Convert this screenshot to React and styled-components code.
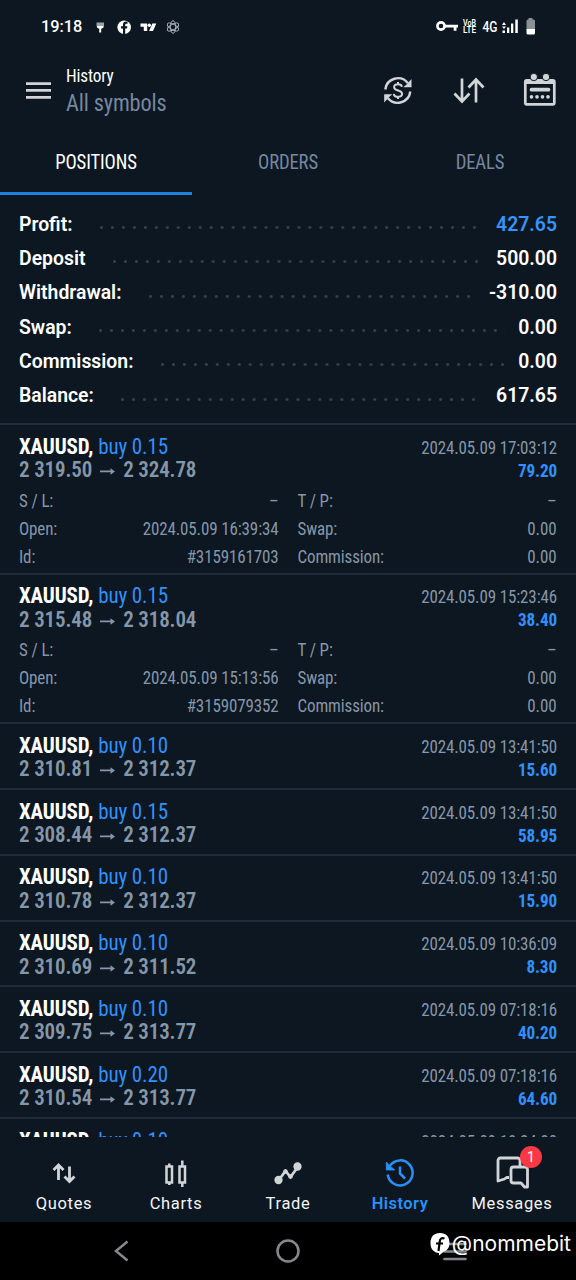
import React from 'react';
import styled, { createGlobalStyle } from 'styled-components';

const GlobalStyle = createGlobalStyle`
  * {
    box-sizing: border-box;
  }

  body {
    margin: 0;
    background: #0c1721;
    font-family: Roboto, 'Liberation Sans', sans-serif;
  }
`;

const Screen = styled.div`
  position: relative;
  display: flex;
  flex-direction: column;
  width: 576px;
  height: 1280px;
  overflow: hidden;
  background: #0c1721;
  color: #fff;
`;

const Condensed = styled.span`
  display: block;
  font-family: 'Roboto Condensed', Roboto, sans-serif;
  font-stretch: ${p => (p.$wide ? 110 : 75)}%;
  font-size: ${p => p.$size}px;
  line-height: ${p => p.$line || p.$size}px;
  font-weight: ${p => p.$weight || 400};
  letter-spacing: -0.13px;
  color: ${p => p.$color || '#fff'};
  white-space: pre;
  transform: scaleY(1.06);
`;

const StatusBar = styled.div`
  display: flex;
  justify-content: space-between;
  height: 52px;
  padding: 0 40px 0 41px;
`;

const StatusGroup = styled.div`
  display: flex;
  align-items: center;
  height: 53px;
`;

const Clock = styled.span`
  width: 54px;
  font-size: 16.3px;
  font-weight: 500;
`;

const Header = styled.header`
  display: flex;
  height: 78px;
  padding: 0 19px 0 25px;
`;

const MenuButton = styled.div`
  padding-top: 29px;
`;

const Actions = styled.div`
  padding-top: 20px;
`;

const Titles = styled.div`
  flex: 1;
  padding: 13px 0 0 15px;
`;

const Tabs = styled.nav`
  display: grid;
  grid-template-columns: repeat(3, 1fr);
  height: 65px;
`;

const Tab = styled.div`
  display: flex;
  justify-content: center;
  padding-top: 21px;
  border-bottom: 3px solid ${p => (p.$active ? '#1d82dc' : 'transparent')};
`;

const Summary = styled.section`
  height: 228px;
  padding: 12px 19px 0;
`;

const SummaryRow = styled.div`
  display: flex;
  align-items: center;
  height: 34.3px;
  font-size: 19.4px;
  font-weight: 600;
`;

const Dots = styled.span`
  flex: none;
  width: ${p => p.$count * 10.97}px;
  height: 3px;
  margin: 7px 0 0 27.5px;
  background: radial-gradient(circle at 1.5px 1.5px, #33404b 1.2px, transparent 1.7px) 0 0 / 10.97px 3px repeat-x;
`;

const SummaryValue = styled.span`
  margin-left: auto;
  color: ${p => (p.$profit ? '#3794fb' : '#fff')};
`;

const TradeList = styled.main`
  height: 714px;
  overflow: hidden;
`;

const Trade = styled.article`
  height: ${p => (p.$open ? 149.6 : 65.8)}px;
  padding: 10.6px 19px 0;
  border-top: 2px solid #1f2b36;
`;

const TradeTop = styled.div`
  display: flex;
  justify-content: space-between;
  height: 46px;
`;

const TradeSide = styled.div`
  padding-top: ${p => (p.$right ? 1 : 0)}px;
  text-align: ${p => (p.$right ? 'right' : 'left')};
`;

const TitleLine = styled.div`
  display: flex;
  gap: 5px;
`;

const PriceLine = styled.div`
  display: flex;
  align-items: center;
  gap: 8px;
  height: 22px;
`;

const Details = styled.div`
  display: grid;
  grid-template-columns: 259.5px 259px;
  column-gap: 19px;
  padding-top: 5px;
`;

const Detail = styled.div`
  display: flex;
  justify-content: space-between;
  height: 28px;
`;

const BottomNav = styled.nav`
  display: grid;
  grid-template-columns: repeat(5, 112px);
  justify-content: center;
  height: 85px;
`;

const NavItem = styled.div`
  position: relative;
  display: flex;
  flex-direction: column;
  align-items: center;
  padding-top: 18px;
  font-size: 16.5px;
  line-height: 20px;
  letter-spacing: ${p => (p.$active ? 0.45 : 0.65)}px;
  font-weight: ${p => (p.$active ? 600 : 400)};
  color: ${p => (p.$active ? '#2a90f8' : '#f3f5f7')};

  svg {
    margin-bottom: 3px;
  }
`;

const Badge = styled.span`
  position: absolute;
  top: 9px;
  left: 64px;
  width: 22px;
  height: 22px;
  border-radius: 50%;
  background: #fb3946;
  color: #fff;
  font-size: 14px;
  line-height: 22px;
  letter-spacing: 0;
  text-align: center;
`;

const SystemNav = styled.footer`
  display: flex;
  justify-content: space-between;
  height: 58px;
  padding: 13px 106px 0;
  background: #000;
`;

const Watermark = styled.div`
  position: absolute;
  right: 5px;
  bottom: 21px;
  display: flex;
  align-items: center;
  gap: 2px;
  font-family: Inter, sans-serif;
  font-size: 21px;
  line-height: 30px;
`;

const summary = [
  { label: 'Profit:', value: '427.65', dots: 35, profit: true },
  { label: 'Deposit', value: '500.00', dots: 34 },
  { label: 'Withdrawal:', value: '-310.00', dots: 30 },
  { label: 'Swap:', value: '0.00', dots: 37 },
  { label: 'Commission:', value: '0.00', dots: 32 },
  { label: 'Balance:', value: '617.65', dots: 33 },
];

const trades = [
  { lot: '0.15', from: '2 319.50', to: '2 324.78', time: '17:03:12', profit: '79.20', opened: '16:39:34', id: '#3159161703' },
  { lot: '0.15', from: '2 315.48', to: '2 318.04', time: '15:23:46', profit: '38.40', opened: '15:13:56', id: '#3159079352' },
  { lot: '0.10', from: '2 310.81', to: '2 312.37', time: '13:41:50', profit: '15.60' },
  { lot: '0.15', from: '2 308.44', to: '2 312.37', time: '13:41:50', profit: '58.95' },
  { lot: '0.10', from: '2 310.78', to: '2 312.37', time: '13:41:50', profit: '15.90' },
  { lot: '0.10', from: '2 310.69', to: '2 311.52', time: '10:36:09', profit: '8.30' },
  { lot: '0.10', from: '2 309.75', to: '2 313.77', time: '07:18:16', profit: '40.20' },
  { lot: '0.20', from: '2 310.54', to: '2 313.77', time: '07:18:16', profit: '64.60' },
  { lot: '0.10', time: '18:24:30' },
];

const muted = '#8696a9';
const blue = '#3190fb';

const DetailRow = ({ label, value }) => (
  <Detail>
    <Condensed $size={17} $line={28} $color={muted}>{label}</Condensed>
    <Condensed $size={17} $line={28} $color={muted} $wide={value === '–'}>{value}</Condensed>
  </Detail>
);

const TradeRow = ({ trade }) => (
  <Trade $open={!!trade.id}>
    <TradeTop>
      <TradeSide>
        <TitleLine>
          <Condensed $size={21} $line={23.5} $weight={700}>XAUUSD,</Condensed>
          <Condensed $size={21} $line={23.5} $color={blue}>buy {trade.lot}</Condensed>
        </TitleLine>
        {trade.from && (
          <PriceLine>
            <Condensed $size={21} $line={22} $weight={600} $color={muted}>{trade.from}</Condensed>
            <svg width="15" height="10" viewBox="0 0 15 10" fill={muted}>
              <path d="M0 5.500h10.500V3.200L15 6.500l-4.500 3.300V7.300H0z" />
            </svg>
            <Condensed $size={21} $line={22} $weight={600} $color={muted}>{trade.to}</Condensed>
          </PriceLine>
        )}
      </TradeSide>
      <TradeSide $right>
        <Condensed $size={17} $line={23} $color={muted}>2024.05.09 {trade.time}</Condensed>
        {trade.profit && (
          <Condensed $size={17.2} $line={23} $weight={700} $color={blue}>{trade.profit}</Condensed>
        )}
      </TradeSide>
    </TradeTop>
    {trade.id && (
      <Details>
        <DetailRow label="S / L:" value="–" />
        <DetailRow label="T / P:" value="–" />
        <DetailRow label="Open:" value={`2024.05.09 ${trade.opened}`} />
        <DetailRow label="Swap:" value="0.00" />
        <DetailRow label="Id:" value={trade.id} />
        <DetailRow label="Commission:" value="0.00" />
      </Details>
    )}
  </Trade>
);

const StatusIcons = () => (
  <svg width="86" height="20" viewBox="95 16 86 20" fill="#fff">
    <path d="M96.500 21.500h7.500v3.500l-1 1h-5.500l-1-1z" opacity=".6" />
    <path d="M97 25h6.500v1.500l-1.500 1h-.8v4h-2v-4h-.7l-1.500-1z" />
    <circle cx="124.200" cy="26.200" r="6.800" />
    <path d="M123 33v-5.500h-2v-2.300h2v-1.700c0-2 1.200-3 3-3h1.500v2.200h-1.200c-.8 0-1.100.4-1.100 1.100v1.400h2.200l-.4 2.300h-1.800V33z" fill="#0c1721" />
    <path d="M140.500 22.500h6.700v7.500h-3.400v-4.200h-3.300z" />
    <circle cx="149.300" cy="24.200" r="1.700" />
    <path d="M152.300 22.500h4l-3.300 7.500h-3.900z" />
    <g fill="none" stroke="#b4babf" strokeWidth=".9">
      <ellipse cx="173" cy="26" rx="2.700" ry="6.300" />
      <ellipse cx="173" cy="26" rx="2.700" ry="6.300" transform="rotate(60 173 26)" />
      <ellipse cx="173" cy="26" rx="2.700" ry="6.300" transform="rotate(120 173 26)" />
    </g>
  </svg>
);

const SignalIcons = () => (
  <svg width="102" height="24" viewBox="434 15 102 24" fill="#fff" fontFamily="Roboto, sans-serif">
    <circle cx="441" cy="26" r="3.600" fill="none" stroke="#fff" strokeWidth="2.600" />
    <path d="M444 24.800h14v2.600h-1.500v3.400h-2.800v-3.400H444z" />
    <text x="463" y="25.500" fontSize="8.500" fontWeight="600" textLength="13" lengthAdjust="spacingAndGlyphs">VoB</text>
    <text x="463" y="33" fontSize="9" fontWeight="600" textLength="13" lengthAdjust="spacingAndGlyphs">LTE</text>
    <text x="482.500" y="31.500" fontSize="14.500" fontWeight="500" textLength="15" lengthAdjust="spacingAndGlyphs">4G</text>
    <path d="M502 25l2-3 2 3zM502 26.500h4l-2 2.500zM502.500 30.500h2.500v2.500h-2.500zM507 27.500h2.300V33H507zM511 23.500h2.300V33H511zM515.300 19.500h2.500V33h-2.500z" />
    <path d="M528.500 18h4v1.500h1a1.500 1.500 0 0 1 1.500 1.500v8.500h-8.500V21a1.500 1.500 0 0 1 1.500-1.500h.5z" fill="#8b9095" />
    <path d="M526.500 29h8.500v4a1.500 1.500 0 0 1-1.500 1.500H528a1.500 1.500 0 0 1-1.500-1.500z" />
  </svg>
);

const MenuIcon = () => (
  <svg width="26" height="20" viewBox="0 0 26 20" fill="#d2d5d7">
    <path d="M1 1.200h25v2.700H1zM1 8.100h25v2.700H1zM1 15.100h25v2.700H1z" />
  </svg>
);

const HeaderIcons = () => (
  <svg width="175" height="36" viewBox="382 72 175 36" fill="none" stroke="#d2d5d7" strokeWidth="2.400">
    <path d="M385.300 89.500a12.700 12.700 0 0 1 22.500-6.500M410.300 91.500a12.700 12.700 0 0 1-22.500 6.500" />
    <path d="M411.500 79v8.200h-8.200l3-2.500 1.500-1.700zM384.200 102.500v-8.200h8.200l-3 2.500-1.500 1.700z" fill="#d2d5d7" stroke="none" />
    <path d="M402 86.800c-.5-1.700-1.800-2.500-4-2.500-2.500 0-3.900 1.200-3.900 3 0 4.200 8 2.300 8 6.500 0 1.900-1.600 3-4.100 3s-4-1.200-4.200-3M398 82v2.300M398 96.800V99" strokeWidth="2" />
    <path d="M462 78.500v23M454.500 93.500l7.500 8 7.500-8M476 102.500v-23M468.500 87.500l7.500-8 7.500 8" strokeWidth="2.700" />
    <rect x="525.300" y="80.300" width="29" height="24" rx="1.500" strokeWidth="2.700" />
    <path d="M525 82h29.500" strokeWidth="4" />
    <g fill="#d2d5d7" stroke="#0c1721" strokeWidth="1">
      <circle cx="533.800" cy="77" r="3.700" />
      <circle cx="546" cy="77" r="3.700" />
    </g>
    <path d="M531.500 89.700h17" strokeWidth="3.700" strokeLinecap="round" />
    <path d="M531.500 96.800h17" strokeWidth="3.700" strokeLinecap="round" strokeDasharray="0 5.500" />
  </svg>
);

const iconProps = { width: 36, height: 36, viewBox: '0 0 36 36', fill: 'none', stroke: '#d2d5d7', strokeWidth: 2.5 };

const QuotesIcon = () => (
  <svg {...iconProps} strokeWidth="2.800">
    <path d="M12.500 25V10.500M7.500 15l5-5 5 5M23.500 11.500V26M18.500 21.500l5 5 5-5" />
  </svg>
);

const ChartsIcon = () => (
  <svg {...iconProps} strokeWidth="2.500">
    <path d="M8.500 11.500h5.500v16H8.500zM11.300 8.500v3M11.300 27.500v2.500M21.500 11.500H27v16h-5.500zM24.300 5.500v6M24.300 27.500V32" />
  </svg>
);

const TradeIcon = () => (
  <svg {...iconProps} strokeWidth="2.700">
    <path d="M8.500 25.500l7-9.500 5 6 8-11" />
    <circle cx="8.500" cy="25" r="2.800" fill="#d2d5d7" />
    <circle cx="27.500" cy="11.500" r="2.800" fill="#d2d5d7" />
    <circle cx="15.500" cy="16.500" r="1" />
    <circle cx="20.500" cy="21.500" r="1" />
  </svg>
);

const HistoryIcon = () => (
  <svg {...iconProps} stroke="#2a90f8">
    <path d="M8 10.500A12.500 12.500 0 1 1 5.700 19.500" />
    <path d="M4.300 7v8h8.500l-3-2.500-3-3z" fill="#2a90f8" strokeWidth=".8" />
    <path d="M18 11.500v7l5 5" />
  </svg>
);

const MessagesIcon = () => (
  <svg {...iconProps} strokeWidth="2.800" strokeLinejoin="round">
    <path d="M15 22.500h-2.500l-2 1.500-6.500 2V5.500A2.500 2.500 0 0 1 6.500 3h17A2.500 2.500 0 0 1 26 5.500V12" />
    <path d="M19.500 12H31a2.500 2.500 0 0 1 2.500 2.500V32h-3L27 28h-7.500a2.500 2.500 0 0 1-2.500-2.500v-11a2.500 2.500 0 0 1 2.500-2.500z" />
  </svg>
);

const navItems = [
  { label: 'Quotes', Icon: QuotesIcon },
  { label: 'Charts', Icon: ChartsIcon },
  { label: 'Trade', Icon: TradeIcon },
  { label: 'History', Icon: HistoryIcon, active: true },
  { label: 'Messages', Icon: MessagesIcon, badge: 1 },
];

const App = () => (
  <>
    <GlobalStyle />
    <Screen>
      <StatusBar>
        <StatusGroup>
          <Clock>19:18</Clock>
          <StatusIcons />
        </StatusGroup>
        <StatusGroup>
          <SignalIcons />
        </StatusGroup>
      </StatusBar>

      <Header>
        <MenuButton>
          <MenuIcon />
        </MenuButton>
        <Titles>
          <Condensed $size={17.2} $line={22}>History</Condensed>
          <Condensed $size={22.3} $line={33} $color="#7787a0">All symbols</Condensed>
        </Titles>
        <Actions>
          <HeaderIcons />
        </Actions>
      </Header>

      <Tabs>
        <Tab $active><Condensed $size={18.7} $line={24}>POSITIONS</Condensed></Tab>
        <Tab><Condensed $size={18.7} $line={24} $color="#7787a0">ORDERS</Condensed></Tab>
        <Tab><Condensed $size={18.7} $line={24} $color="#7787a0">DEALS</Condensed></Tab>
      </Tabs>

      <Summary>
        {summary.map(row => (
          <SummaryRow key={row.label}>
            <span>{row.label}</span>
            <Dots $count={row.dots} />
            <SummaryValue $profit={row.profit}>{row.value}</SummaryValue>
          </SummaryRow>
        ))}
      </Summary>

      <TradeList>
        {trades.map((trade, index) => (
          <TradeRow key={index} trade={trade} />
        ))}
      </TradeList>

      <BottomNav>
        {navItems.map(({ label, Icon, active, badge }) => (
          <NavItem key={label} $active={active}>
            <Icon />
            {label}
            {badge && <Badge>{badge}</Badge>}
          </NavItem>
        ))}
      </BottomNav>

      <SystemNav>
        <svg width="30" height="32" viewBox="0 0 30 32" fill="none" stroke="#85888a" strokeWidth="2.500">
          <path d="M21.500 6.500L10 16l11.500 9.500" />
        </svg>
        <svg width="30" height="32" viewBox="0 0 30 32" fill="none" stroke="#85888a" strokeWidth="2.500">
          <circle cx="15" cy="16" r="10.500" />
        </svg>
        <svg width="30" height="32" viewBox="0 0 30 32" fill="none" stroke="#85888a" strokeWidth="2.700" strokeLinecap="round">
          <path d="M4.500 9h21M4.500 16.500h21M4.500 24h21" />
        </svg>
      </SystemNav>

      <Watermark>
        <svg width="20" height="24" viewBox="0 0 20 24">
          <path d="M10 1C4 1 .5 4.500.500 11S4 20.500 9 21v2.500l5-4c3.500-1.500 5.500-4 5.500-8.500C19.500 4.500 16 1 10 1z" fill="#fff" />
          <path d="M14.500 6.500c-3-1-4.500.5-4.800 3L8.500 19M6 11.500h7" fill="none" stroke="#000" strokeWidth="2.200" />
        </svg>
        <span>@nommebit</span>
      </Watermark>
    </Screen>
  </>
);

export default App;
